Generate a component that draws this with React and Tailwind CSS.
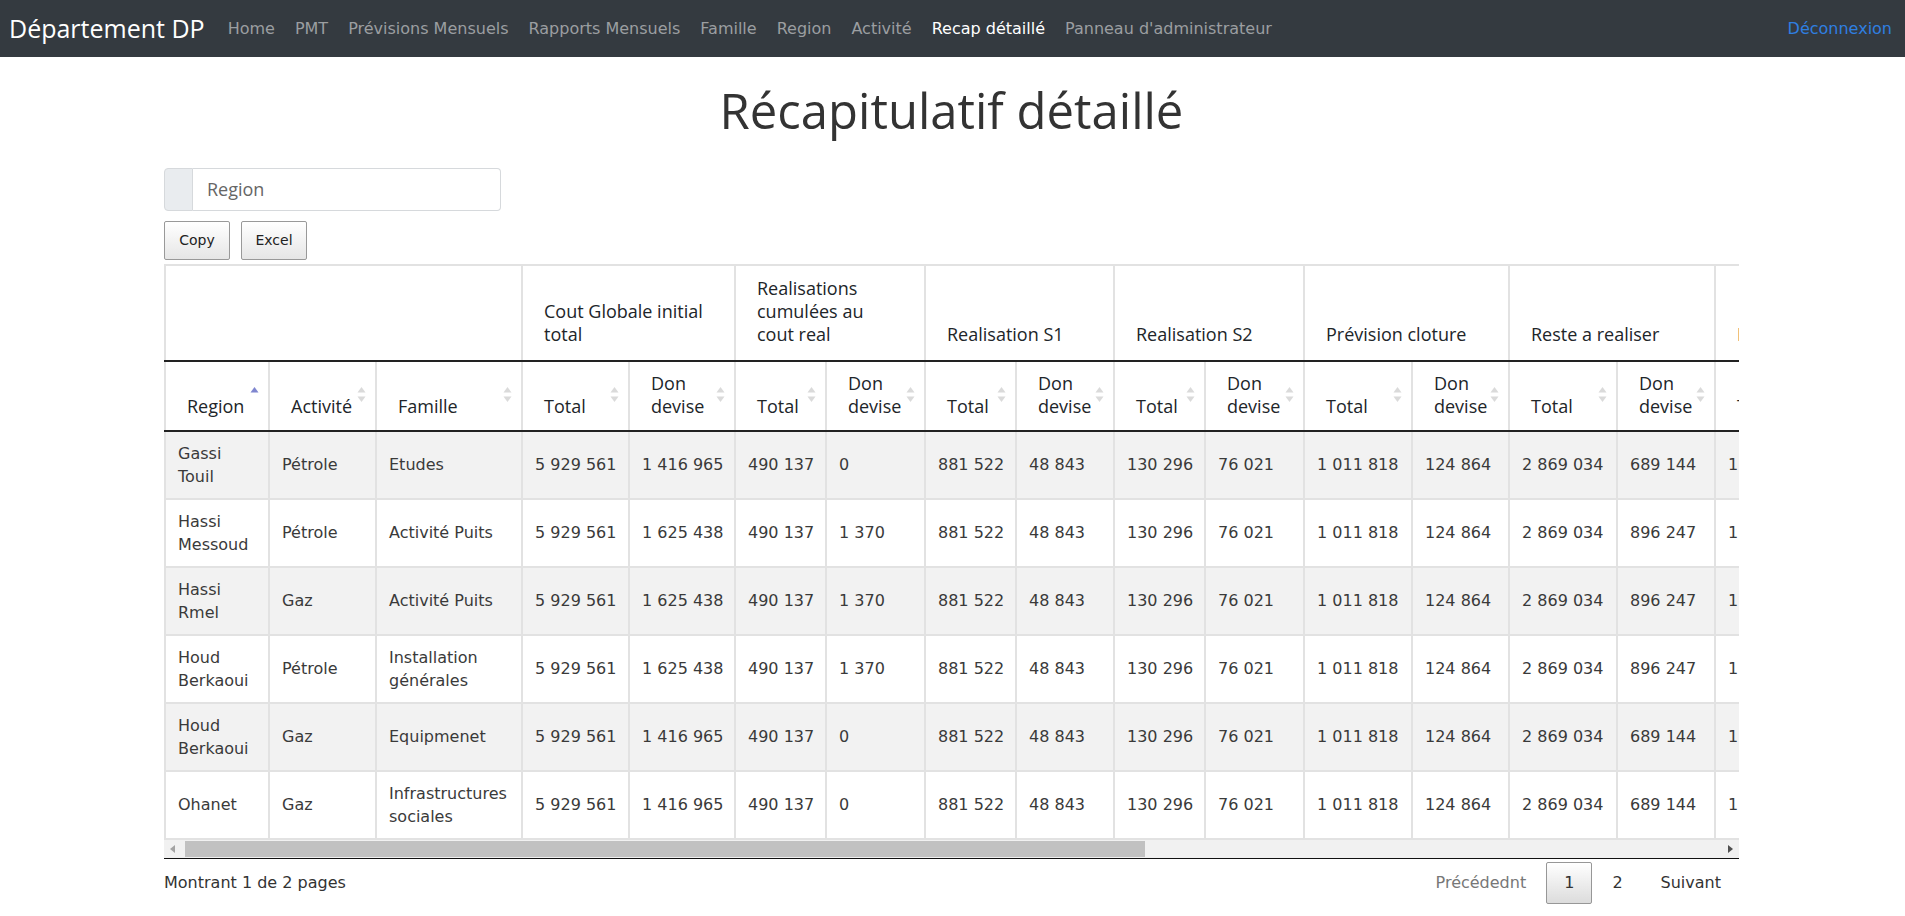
import { useState } from "react";

const navLinks = ["Home", "PMT", "Prévisions Mensuels", "Rapports Mensuels", "Famille", "Region", "Activité", "Recap détaillé", "Panneau d'administrateur"];

const groups = ["Cout Globale initial total", "Realisations cumulées au cout real", "Realisation S1", "Realisation S2", "Prévision cloture", "Reste a realiser", "Prévision N+1"];

const colWidths = [104, 107, 146, 107, 106, 91, 99, 91, 98, 91, 99, 108, 97, 108, 98, 107, 106];

const rows = [
  ["Gassi Touil", "Pétrole", "Etudes", "5 929 561", "1 416 965", "490 137", "0", "881 522", "48 843", "130 296", "76 021", "1 011 818", "124 864", "2 869 034", "689 144", "1 250 000", "320 000"],
  ["Hassi Messoud", "Pétrole", "Activité Puits", "5 929 561", "1 625 438", "490 137", "1 370", "881 522", "48 843", "130 296", "76 021", "1 011 818", "124 864", "2 869 034", "896 247", "1 250 000", "320 000"],
  ["Hassi Rmel", "Gaz", "Activité Puits", "5 929 561", "1 625 438", "490 137", "1 370", "881 522", "48 843", "130 296", "76 021", "1 011 818", "124 864", "2 869 034", "896 247", "1 250 000", "320 000"],
  ["Houd Berkaoui", "Pétrole", "Installation générales", "5 929 561", "1 625 438", "490 137", "1 370", "881 522", "48 843", "130 296", "76 021", "1 011 818", "124 864", "2 869 034", "896 247", "1 250 000", "320 000"],
  ["Houd Berkaoui", "Gaz", "Equipmenet", "5 929 561", "1 416 965", "490 137", "0", "881 522", "48 843", "130 296", "76 021", "1 011 818", "124 864", "2 869 034", "689 144", "1 250 000", "320 000"],
  ["Ohanet", "Gaz", "Infrastructures sociales", "5 929 561", "1 416 965", "490 137", "0", "881 522", "48 843", "130 296", "76 021", "1 011 818", "124 864", "2 869 034", "689 144", "1 250 000", "320 000"],
];

function SortIcon({ active }) {
  return (
    <span className="absolute right-[9px] top-[24px]">
      <svg width="9" height="17" viewBox="0 0 9 17">
        <path d="M4.5 1 L8.5 6.5 L0.5 6.5 Z" fill={active ? "#7f86cf" : "#dadada"} />
        {!active && <path d="M0.5 10.5 L8.5 10.5 L4.5 16 Z" fill="#dadada" />}
      </svg>
    </span>
  );
}

function ScrollBar() {
  return (
    <div className="flex h-[19px] items-center bg-[#f1f1f1] border-b border-[#111]">
      <div className="flex w-[17px] justify-center">
        <svg width="5" height="8" viewBox="0 0 5 8"><path d="M5 0 L0 4 L5 8 Z" fill="#a3a3a3" /></svg>
      </div>
      <div className="ml-[4px] h-[16px] w-[960px] bg-[#c1c1c1]" />
      <div className="flex-1" />
      <div className="flex w-[17px] justify-center">
        <svg width="5" height="8" viewBox="0 0 5 8"><path d="M0 0 L5 4 L0 8 Z" fill="#505050" /></svg>
      </div>
    </div>
  );
}

export default function App() {
  const [page, setPage] = useState(1);
  const th = "relative border-r-2 border-r-[#e2e2e2] border-b-2 border-b-[#222] pl-[21px] pr-[22px] align-bottom text-left font-normal";
  const sub = ["Region", "Activité", "Famille"];

  return (
    <div className="min-h-screen bg-white text-[#212529]">
      <nav className="flex h-[57px] items-center bg-[#343a40] pl-[9px] pr-[13px]">
        <span className="mr-[13px] font-['Open_Sans',sans-serif] text-[25px] text-white">Département DP</span>
        <div className="flex font-['DejaVu_Sans',sans-serif] text-[16px]">
          {navLinks.map((l) => (
            <a key={l} className={"px-[10px] " + (l === "Recap détaillé" ? "text-white" : "text-[#9b9ea1]")}>{l}</a>
          ))}
        </div>
        <a className="ml-auto font-['DejaVu_Sans',sans-serif] text-[16px] text-[#2f7fe0]">Déconnexion</a>
      </nav>

      <div className="ml-[164px] w-[1575px]">
        <h1 className="mt-[24px] text-center font-['Open_Sans',sans-serif] text-[49px] font-normal leading-[1.2] text-[#333]">Récapitulatif détaillé</h1>

        <div className="mt-[28px] flex h-[43px] w-[337px]">
          <div className="w-[29px] rounded-l-[4px] border border-[#d6d9dc] bg-[#e9ecef]" />
          <input
            placeholder="Region"
            className="flex-1 rounded-r-[4px] border border-l-0 border-[#d6d9dc] pl-[14px] font-['Open_Sans',sans-serif] text-[18px] text-[#495057] outline-none placeholder:text-[#666]"
          />
        </div>

        <div className="mt-[10px] flex gap-[11px] font-['DejaVu_Sans',sans-serif] text-[14px] text-[#222]">
          {["Copy", "Excel"].map((b) => (
            <button key={b} className="h-[39px] w-[66px] rounded-[2px] border border-[#999] bg-gradient-to-b from-white to-[#e6e6e6]">{b}</button>
          ))}
        </div>

        <div className="mt-[4px] w-[1575px] overflow-hidden">
          <table className="table-fixed border-collapse border-t-2 border-l-2 border-[#e2e2e2]" style={{ width: colWidths.reduce((a, b) => a + b, 0) }}>
            <colgroup>
              {colWidths.map((w, i) => <col key={i} style={{ width: w }} />)}
            </colgroup>
            <thead className="font-['Open_Sans',sans-serif] text-[18px] leading-[23px]">
              <tr className="h-[96px]">
                <th colSpan={3} className={th + " pb-[14px]"} />
                {groups.map((g) => (
                  <th key={g} colSpan={2} className={th + " pb-[14px]"}>{g}</th>
                ))}
              </tr>
              <tr className="h-[70px]">
                {sub.map((s, i) => (
                  <th key={s} className={th + " pb-[12px]"}>{s}<SortIcon active={i === 0} /></th>
                ))}
                {groups.map((g) => [
                  <th key={g + "t"} className={th + " pb-[12px]"}>Total<SortIcon /></th>,
                  <th key={g + "d"} className={th + " pb-[12px] pl-[19px]"}>Don devise<SortIcon /></th>,
                ])}
              </tr>
            </thead>
            <tbody className="font-['DejaVu_Sans',sans-serif] text-[16px] leading-[23px] text-[#3a3a3a]">
              {rows.map((r, i) => (
                <tr key={i} className={"h-[67px] " + (i % 2 === 0 ? "bg-[#f2f2f2]" : "bg-white")}>
                  {r.map((c, j) => (
                    <td key={j} className={"border-r-2 border-b-2 border-[#e2e2e2] px-[12px] py-[10px] align-middle " + (j > 2 ? "whitespace-nowrap" : "")}>{c}</td>
                  ))}
                </tr>
              ))}
            </tbody>
          </table>
          <ScrollBar />
        </div>

        <div className="mt-[3px] flex items-center justify-between font-['DejaVu_Sans',sans-serif] text-[16px] text-[#333]">
          <span>Montrant 1 de 2 pages</span>
          <div className="flex items-center">
            <a className="ml-[2px] border border-transparent px-[17px] py-[8px] text-[#777]">Précédednt</a>
            {[1, 2].map((p) => (
              <a
                key={p}
                onClick={() => setPage(p)}
                className={"ml-[2px] rounded-[2px] border px-[17px] py-[8px] " + (page === p ? "border-[#979797] bg-gradient-to-b from-white to-[#dcdcdc]" : "border-transparent")}
              >{p}</a>
            ))}
            <a className="ml-[2px] border border-transparent px-[17px] py-[8px]">Suivant</a>
          </div>
        </div>
      </div>
    </div>
  );
}
